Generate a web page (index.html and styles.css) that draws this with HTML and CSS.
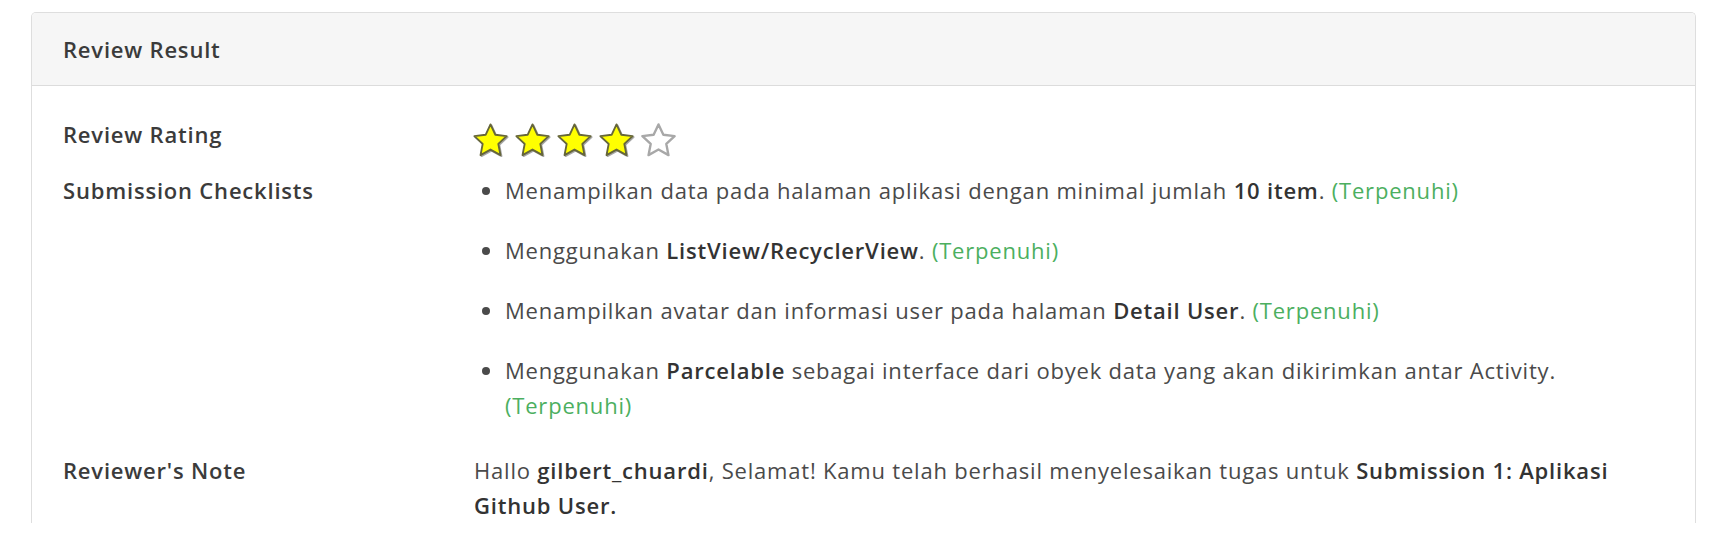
FILE: index.html
```html
<!DOCTYPE html>
<html lang="id">
<head>
<meta charset="utf-8">
<title>Review Result</title>
<link rel="stylesheet" href="styles.css">
</head>
<body>
<div class="card">
  <div class="card-header">Review Result</div>
  <div class="card-body">
    <div class="row row-rating">
      <div class="label">Review Rating</div>
      <div class="value stars">
        <svg class="star full" viewBox="0 0 24 24"><path d="M12 2.6l2.85 6.05 6.6.8-4.88 4.55 1.27 6.55L12 17.3l-5.84 3.25 1.27-6.55L2.55 9.45l6.6-.8z"/></svg>
        <svg class="star full" viewBox="0 0 24 24"><path d="M12 2.6l2.85 6.05 6.6.8-4.88 4.55 1.27 6.55L12 17.3l-5.84 3.25 1.27-6.55L2.55 9.45l6.6-.8z"/></svg>
        <svg class="star full" viewBox="0 0 24 24"><path d="M12 2.6l2.85 6.05 6.6.8-4.88 4.55 1.27 6.55L12 17.3l-5.84 3.25 1.27-6.55L2.55 9.45l6.6-.8z"/></svg>
        <svg class="star full" viewBox="0 0 24 24"><path d="M12 2.6l2.85 6.05 6.6.8-4.88 4.55 1.27 6.55L12 17.3l-5.84 3.25 1.27-6.55L2.55 9.45l6.6-.8z"/></svg>
        <svg class="star empty" viewBox="0 0 24 24"><path d="M12 2.6l2.85 6.05 6.6.8-4.88 4.55 1.27 6.55L12 17.3l-5.84 3.25 1.27-6.55L2.55 9.45l6.6-.8z"/></svg>
      </div>
    </div>
    <div class="row row-check">
      <div class="label">Submission Checklists</div>
      <div class="value">
        <ul class="checklist">
          <li>Menampilkan data pada halaman aplikasi dengan minimal jumlah <b>10 item</b>. <span class="ok">(Terpenuhi)</span></li>
          <li>Menggunakan <b>ListView/RecyclerView</b>. <span class="ok">(Terpenuhi)</span></li>
          <li>Menampilkan avatar dan informasi user pada halaman <b>Detail User</b>. <span class="ok">(Terpenuhi)</span></li>
          <li>Menggunakan <b>Parcelable</b> sebagai interface dari obyek data yang akan dikirimkan antar Activity. <span class="ok">(Terpenuhi)</span></li>
        </ul>
      </div>
    </div>
    <div class="row row-note">
      <div class="label">Reviewer's Note</div>
      <div class="value">Hallo <b>gilbert_chuardi</b>, Selamat! Kamu telah berhasil menyelesaikan tugas untuk <b>Submission 1: Aplikasi</b> <b>Github User.</b></div>
    </div>
  </div>
</div>
</body>
</html>
```
FILE: styles.css
```css
html, body {
  margin: 0;
  padding: 0;
  background: #ffffff;
}
body {
  font-family: "Open Sans", "Lato", sans-serif;
  color: #3a3a3a;
  letter-spacing: 0.8px;
  padding: 12px 30px 0 31px;
}
.card {
  border: 1px solid #dedede;
  border-bottom: none;
  border-radius: 5px 5px 0 0;
  overflow: hidden;
}
.card-header {
  background: #f6f6f6;
  border-bottom: 1px solid #dcdcdc;
  height: 72px;
  display: flex;
  align-items: center;
  padding-left: 31px;
  font-size: 22px;
  font-weight: 600;
  color: #3b3b3b;
}
.card-body {
  padding: 31px 30px 0 31px;
}
.row {
  display: grid;
  grid-template-columns: 411px 1fr;
  font-size: 22px;
  line-height: 35px;
}
.label {
  font-weight: 600;
  color: #3b3b3b;
}
.value {
  font-weight: 400;
  color: #4a4a4a;
}
.value b {
  font-weight: 600;
  color: #333333;
}
.row-rating { margin-bottom: 12px; }
.stars {
  display: flex;
  gap: 1px;
  padding-top: 3px;
  margin-left: -4px;
}
.star {
  width: 41px;
  height: 41px;
  display: block;
}
.star path {
  stroke-linejoin: round;
}
.star.full path {
  fill: #ffff00;
  stroke: #66663a;
  stroke-width: 1.1;
}
.star.full {
  filter: drop-shadow(1px 1px 0.6px rgba(0,0,0,0.35));
}
.star.empty path {
  fill: none;
  stroke: #a8a8a8;
  stroke-width: 1.4;
}
.row-check { margin-bottom: 30px; }
.checklist {
  margin: 0;
  padding-left: 31px;
}
.checklist li {
  margin-bottom: 25px;
}
.checklist li:last-child {
  margin-bottom: 0;
}
.ok {
  color: #4caf5f;
}
```
